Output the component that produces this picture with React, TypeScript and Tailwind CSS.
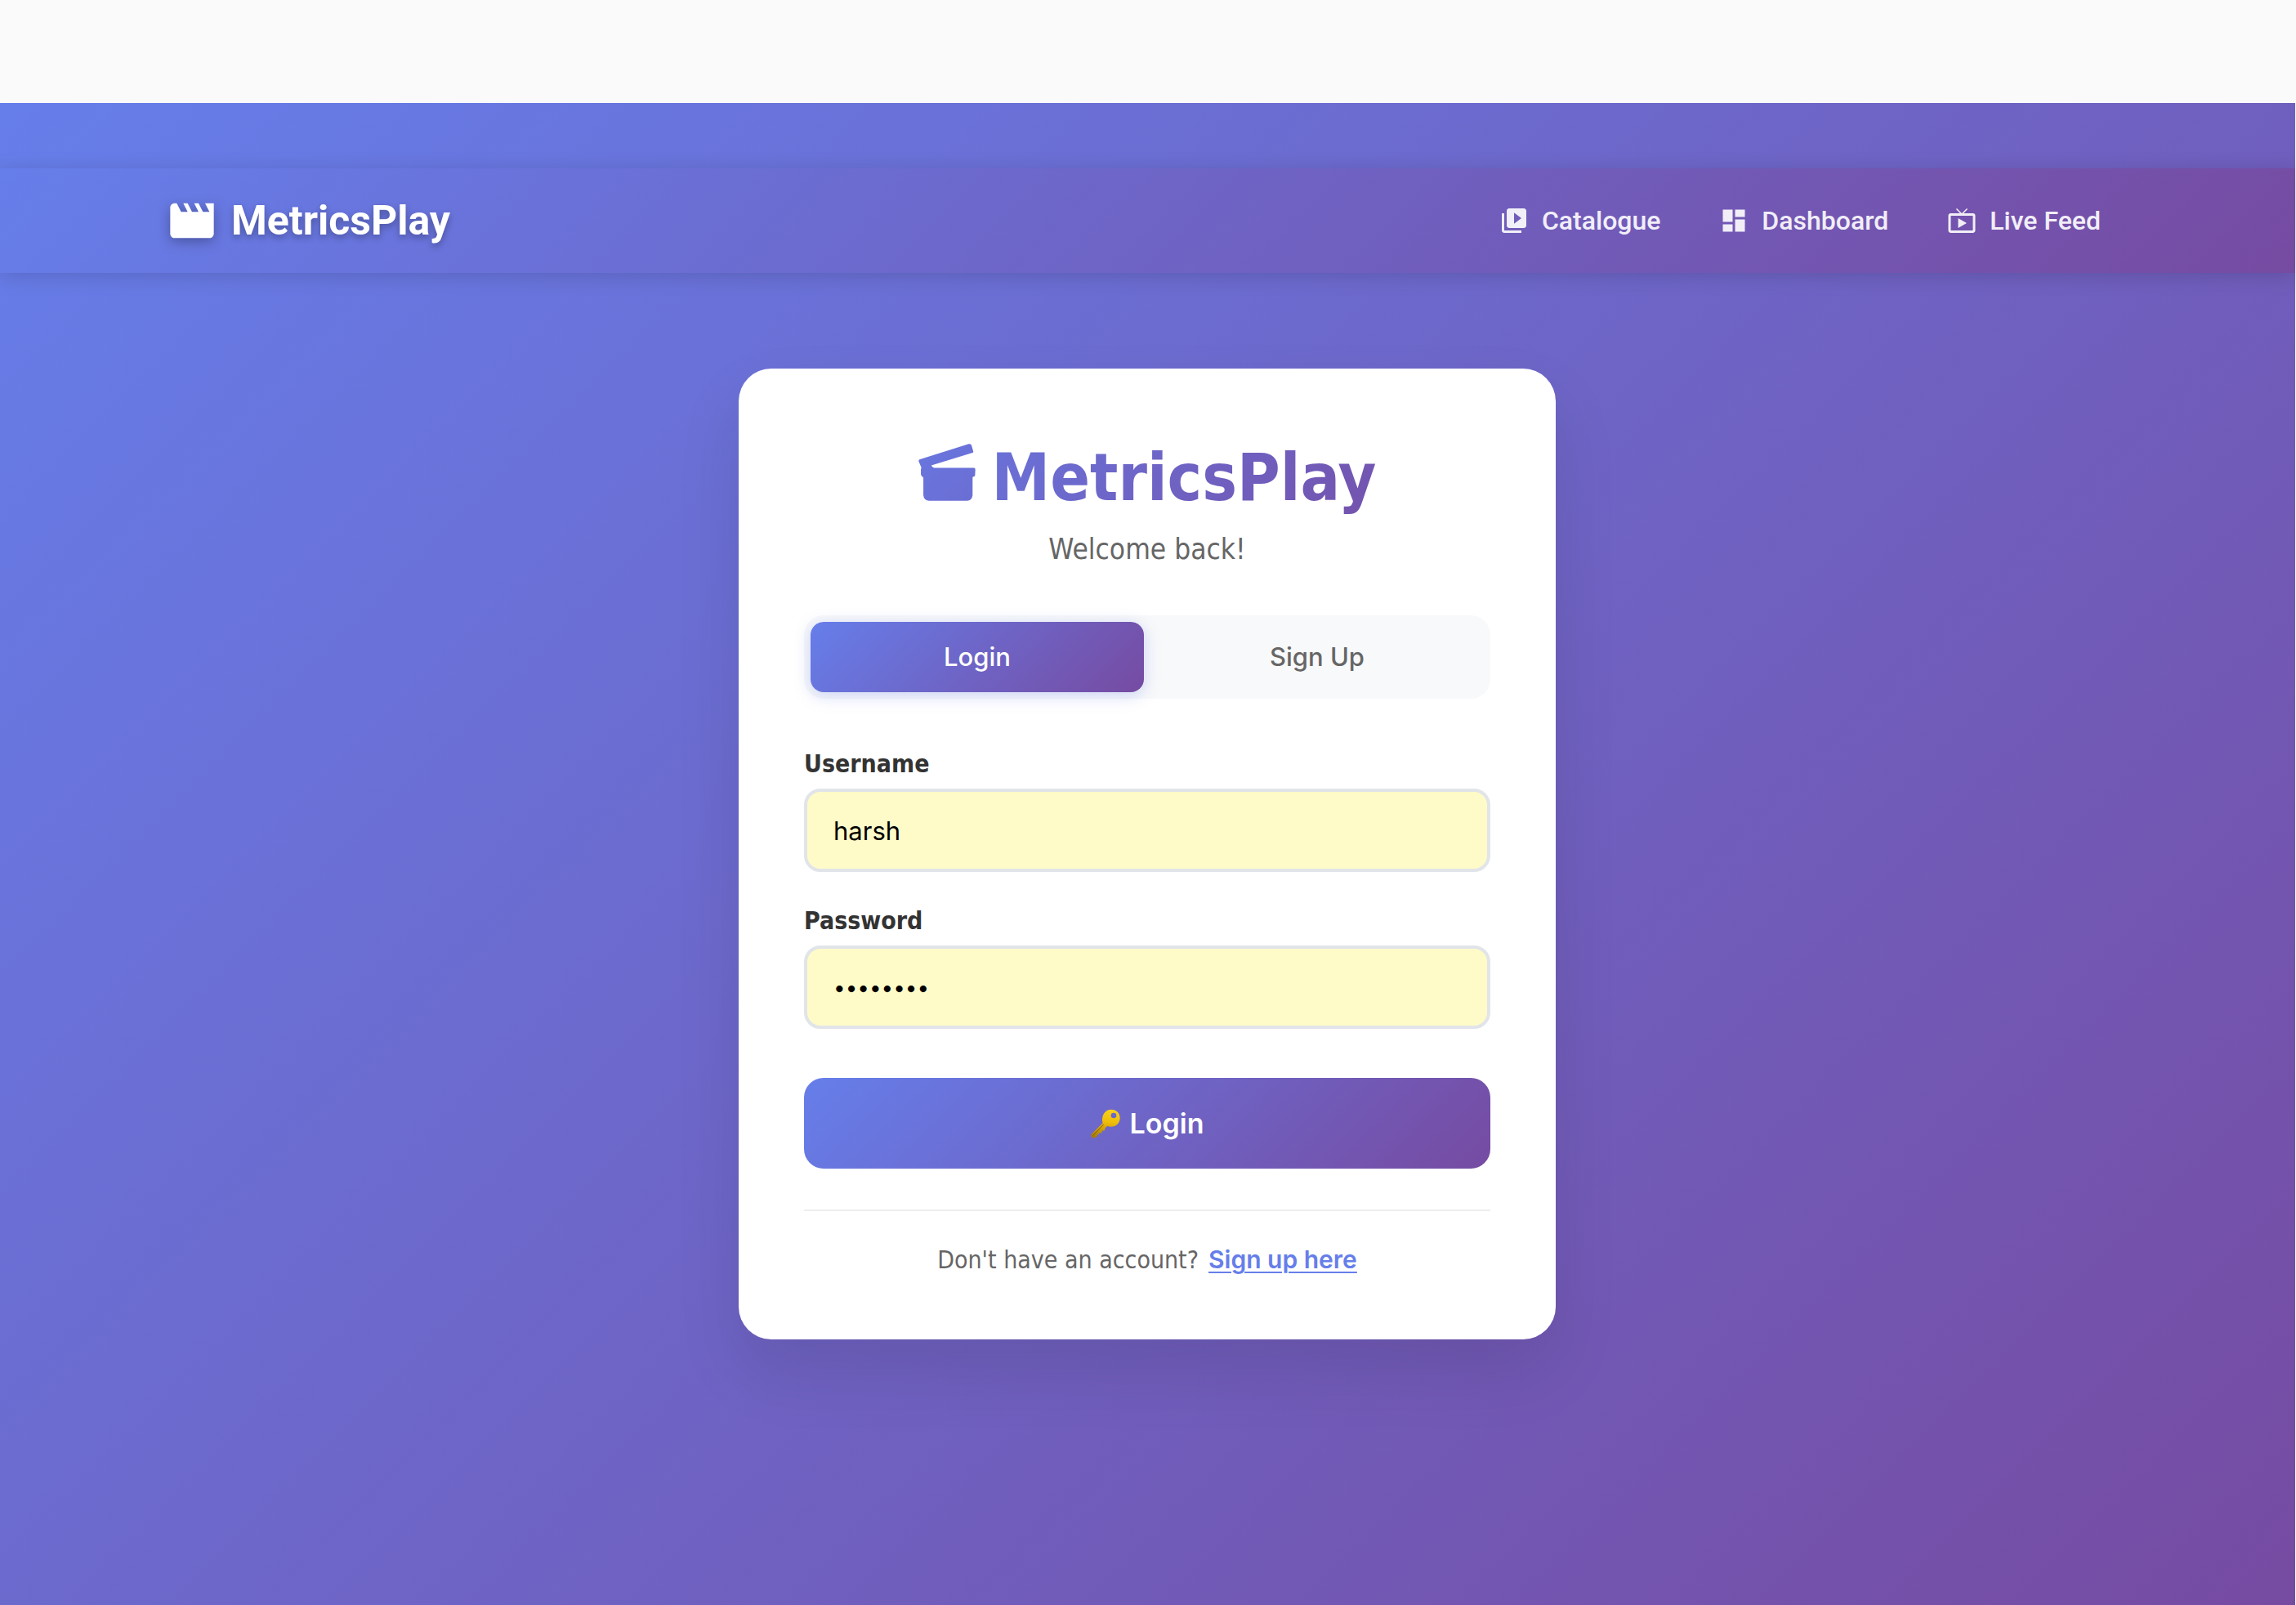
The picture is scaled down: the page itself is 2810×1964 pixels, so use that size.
import { useState } from "react";
import type { ReactNode } from "react";
import { MdDashboard, MdLiveTv, MdMovie, MdVideoLibrary } from "react-icons/md";

function ClapperIcon() {
  return (
    <svg viewBox="735 341 208 208" className="mb-3.5 size-[70px] shrink-0" aria-hidden="true">
      <defs>
        <linearGradient id="clapper" gradientUnits="userSpaceOnUse" x1="310" y1="300" x2="1724" y2="1714">
          <stop offset="0" stopColor="#667eea" />
          <stop offset="1" stopColor="#764ba2" />
        </linearGradient>
      </defs>
      <path
        fill="url(#clapper)"
        d="M739 398 L918 342 Q925 341 928 346 L935 370 Q935 373 932 374 L782 420 Q784 426 792 429 H938 Q943 431 942 436 L941 456 Q940 461 933 461 Q932 462 932 466 V528 Q930 547 912 548 H774 Q755 547 753 528 V466 Q753 462 750 461 Q745 460 744 452 V434 Q747 430 745 426 L736 405 Q735 400 739 398Z"
      />
    </svg>
  );
}

function KeyIcon() {
  return (
    <svg viewBox="0 0 108 106" className="size-9 shrink-0" aria-hidden="true">
      <defs>
        <linearGradient id="key" x1="0.6" y1="0" x2="0.5" y2="1">
          <stop offset="0" stopColor="#f8d21c" />
          <stop offset="0.45" stopColor="#eebd08" />
          <stop offset="1" stopColor="#a87c08" />
        </linearGradient>
      </defs>
      <path
        fill="url(#key)"
        fillRule="evenodd"
        d="M75 1 C94 1 107 14 107 32 C107 51 93 64 75 64 C69 64 64 63 61 61 L56 67 L52 67 L53 74 L48 79 L42 78 L41 85 L36 88 L31 87 L30 91 L24 95 L23 100 L16 105 L3 104 L1 93 L44 51 C42 46 42 41 42 35 C44 15 57 1 75 1 Z M84 13 A10 10 0 1 0 84 33 A10 10 0 1 0 84 13 Z"
      />
      <path d="M47 56 L7 97" stroke="#7d5a06" strokeWidth="3" fill="none" />
    </svg>
  );
}

function NavLink({ icon, children }: { icon: ReactNode; children: ReactNode }) {
  return (
    <a href="#" className="flex items-center gap-4 text-[32px] leading-[48px] font-medium text-white/90">
      {icon}
      {children}
    </a>
  );
}

function Field({ id, label, type, value, onChange, size }: {
  id: string; label: string; type: string; value: string; onChange: (v: string) => void; size: string;
}) {
  return (
    <div className="flex flex-col gap-2">
      <label htmlFor={id} className="font-['DejaVu_Sans_Condensed','DejaVu_Sans',sans-serif] text-[30px] leading-[44px] font-bold text-[#333]">
        {label}
      </label>
      <input
        id={id}
        type={type}
        value={value}
        onChange={(e) => onChange(e.target.value)}
        className={`h-[102px] w-full rounded-[20px] border-4 border-[#e1e5e9] bg-[#fffbc8] px-8 text-black outline-none ${size}`}
      />
    </div>
  );
}

export default function App() {
  const [username, setUsername] = useState("harsh");
  const [password, setPassword] = useState("metrics1");

  return (
    <div className="flex min-h-screen flex-col bg-[#fafafa] pt-[126px] pr-px">
      <div className="flex flex-1 flex-col bg-[linear-gradient(135deg,#667eea_0%,#764ba2_100%)]">
        <header className="mt-20 bg-[linear-gradient(135deg,#667eea_0%,#764ba2_100%)] pr-[3px] font-[Roboto,sans-serif] shadow-[0_4px_24px_rgba(0,0,0,0.15)]">
          <div className="mx-auto flex h-32 max-w-[2400px] items-center justify-between">
            <a href="#" className="flex items-center gap-4 text-[50px] leading-[64px] font-bold text-white text-shadow-[0_4px_8px_rgba(0,0,0,0.3)]">
              <MdMovie className="size-16 drop-shadow-[0_4px_8px_rgba(0,0,0,0.3)]" />
              MetricsPlay
            </a>
            <nav className="flex items-center gap-[72px] pr-8">
              <NavLink icon={<MdVideoLibrary className="size-9" />}>Catalogue</NavLink>
              <NavLink icon={<MdDashboard className="size-9" />}>Dashboard</NavLink>
              <NavLink icon={<MdLiveTv className="size-9" />}>Live Feed</NavLink>
            </nav>
          </div>
        </header>

        <main className="flex flex-1 items-start justify-center pt-[117px] pr-[17px] pb-20 pl-4 font-[Inter,sans-serif]">
          <section className="w-full max-w-[1000px] rounded-[40px] bg-white p-20 shadow-[0_40px_80px_rgba(0,0,0,0.1)]">
            <h1 className="flex items-center justify-center gap-5 bg-[linear-gradient(135deg,#667eea_0%,#764ba2_100%)] bg-clip-text font-['DejaVu_Sans_Condensed','DejaVu_Sans',sans-serif] text-[80px] leading-[108px] font-bold text-transparent">
              <ClapperIcon />
              MetricsPlay
            </h1>
            <p className="mt-3 text-center font-['DejaVu_Sans_Condensed','DejaVu_Sans',sans-serif] text-[35px] leading-[42px] text-[#666]">
              Welcome back!
            </p>

            <div className="mt-[60px] flex gap-2 rounded-[24px] bg-[#f8f9fa] p-2">
              <button type="button" className="h-[86px] flex-1 rounded-[16px] bg-[linear-gradient(135deg,#667eea_0%,#764ba2_100%)] text-[31px] font-medium text-white shadow-[0_4px_20px_rgba(102,126,234,0.3)]">
                Login
              </button>
              <button type="button" className="h-[86px] flex-1 rounded-[16px] text-[31px] font-medium text-[#666]">
                Sign Up
              </button>
            </div>

            <form className="mt-[58px] flex flex-col gap-[38px]" onSubmit={(e) => e.preventDefault()}>
              <Field id="username" label="Username" type="text" value={username} onChange={setUsername} size="text-[31px]" />
              <Field id="password" label="Password" type="password" value={password} onChange={setPassword} size="text-[26px]" />
              <button type="submit" className="mt-[22px] flex h-[111px] w-full items-center justify-center gap-3 rounded-[24px] bg-[linear-gradient(135deg,#667eea_0%,#764ba2_100%)] text-[34px] font-semibold text-white">
                <KeyIcon />
                Login
              </button>
            </form>

            <p className="mt-[50px] flex items-baseline justify-center gap-3 border-t-2 border-[#eee] pt-[42px] font-['DejaVu_Sans_Condensed','DejaVu_Sans',sans-serif] text-[30px] leading-[35px] text-[#666]">
              Don't have an account?
              <a href="#" className="font-[Inter,sans-serif] text-[30px] font-semibold text-[#667eea] underline decoration-2 underline-offset-4">
                Sign up here
              </a>
            </p>
          </section>
        </main>
      </div>
    </div>
  );
}
